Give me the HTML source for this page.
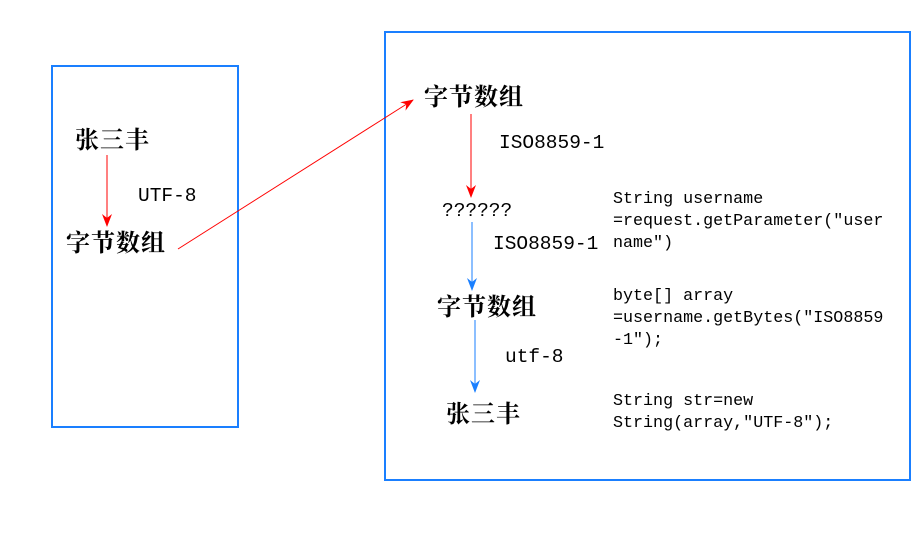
<!DOCTYPE html>
<html><head><meta charset="utf-8"><style>
body{margin:0;width:918px;height:557px;background:#fff;position:relative;overflow:hidden}
.t{position:absolute;white-space:nowrap;color:#000}
.c{font-family:"Liberation Serif","Noto Serif CJK SC",serif;font-size:24px;line-height:28px;font-weight:bold;letter-spacing:1px}
.m{font-family:"Liberation Mono","Noto Sans CJK SC",monospace;font-size:16.7px;line-height:22px}
.l{font-size:19.5px}
svg{position:absolute;left:0;top:0}
</style></head><body>
<svg width="918" height="557">
<defs>
<marker id="r" markerWidth="14" markerHeight="14" refX="12" refY="6" orient="auto" markerUnits="userSpaceOnUse"><path d="M0,1 L13,6 L0,11 L4,6z" fill="#f00"/></marker>
<marker id="b" markerWidth="14" markerHeight="14" refX="12" refY="6" orient="auto" markerUnits="userSpaceOnUse"><path d="M0,1 L13,6 L0,11 L4,6z" fill="#1a7fff"/></marker>
</defs>
<rect x="52" y="66" width="186" height="361" fill="none" stroke="#1a7fff" stroke-width="2"/>
<rect x="385" y="32" width="525" height="448" fill="none" stroke="#1a7fff" stroke-width="2"/>
<line x1="107" y1="155" x2="107" y2="226" stroke="#f00" stroke-width="1" marker-end="url(#r)"/>
<line x1="178" y1="249" x2="413" y2="100" stroke="#f00" stroke-width="1" marker-end="url(#r)"/>
<line x1="471" y1="114" x2="471" y2="197" stroke="#f00" stroke-width="1" marker-end="url(#r)"/>
<line x1="472" y1="222" x2="472" y2="290" stroke="#1a7fff" stroke-width="1" marker-end="url(#b)"/>
<line x1="475" y1="320" x2="475" y2="392" stroke="#1a7fff" stroke-width="1" marker-end="url(#b)"/>
</svg>
<div class="t c" style="left:75px;top:127px">张三丰</div>
<div class="t m l" style="left:138px;top:185px">UTF-8</div>
<div class="t c" style="left:66px;top:230px">字节数组</div>
<div class="t c" style="left:424px;top:84px">字节数组</div>
<div class="t m l" style="left:499px;top:132px">ISO8859-1</div>
<div class="t m l" style="left:442px;top:200px">??????</div>
<div class="t m l" style="left:493px;top:233px">ISO8859-1</div>
<div class="t c" style="left:437px;top:294px">字节数组</div>
<div class="t m l" style="left:505px;top:346px">utf-8</div>
<div class="t c" style="left:446px;top:401px">张三丰</div>
<div class="t m" style="left:613px;top:189px">String username<br>=request.getParameter("user<br>name")</div>
<div class="t m" style="left:613px;top:286px">byte[] array<br>=username.getBytes("ISO8859<br>-1");</div>
<div class="t m" style="left:613px;top:391px">String str=new<br>String(array,"UTF-8");</div>
</body></html>
